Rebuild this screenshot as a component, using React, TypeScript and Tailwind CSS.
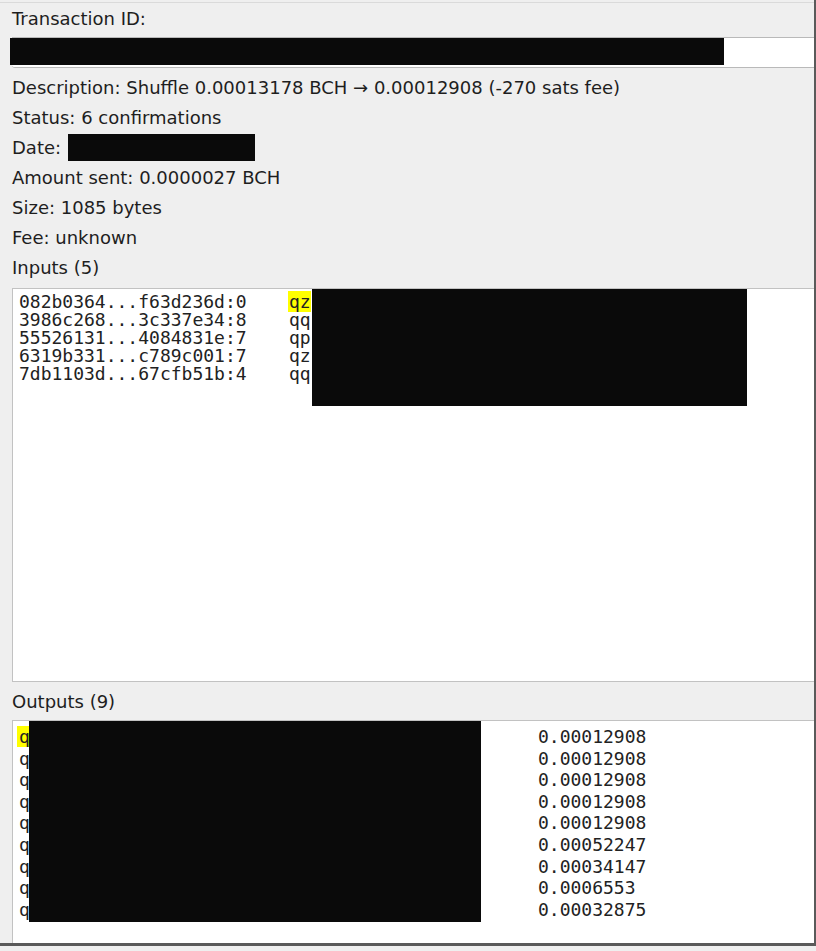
const inputs = [
  { prevout: "082b0364...f63d236d:0", addr: "qz", mine: true },
  { prevout: "3986c268...3c337e34:8", addr: "qq", mine: false },
  { prevout: "55526131...4084831e:7", addr: "qp", mine: false },
  { prevout: "6319b331...c789c001:7", addr: "qz", mine: false },
  { prevout: "7db1103d...67cfb51b:4", addr: "qq", mine: false },
];

const outputs = [
  { addr: "q", amount: "0.00012908", mine: true },
  { addr: "q", amount: "0.00012908", mine: false },
  { addr: "q", amount: "0.00012908", mine: false },
  { addr: "q", amount: "0.00012908", mine: false },
  { addr: "q", amount: "0.00012908", mine: false },
  { addr: "q", amount: "0.00052247", mine: false },
  { addr: "q", amount: "0.00034147", mine: false },
  { addr: "q", amount: "0.0006553", mine: false },
  { addr: "q", amount: "0.00032875", mine: false },
];

const sans = "font-['DejaVu_Sans',sans-serif]";
const mono = "font-['DejaVu_Sans_Mono',monospace]";

function InfoRow({ children }: { children: React.ReactNode }) {
  return <div className="h-[30px] flex items-center">{children}</div>;
}

export default function App() {
  return (
    <div
      className={`w-[816px] h-[951px] bg-[#efefef] text-[18px] text-[#1e1e1e] ${sans} flex flex-col`}
    >
      <div className="h-[946px] border-r-2 border-b-[3px] border-[#5a5a5a] flex flex-col pt-[2px]">
        <div className="border-t border-[#dadada] flex flex-col flex-1 pl-[12px]">
          <div className="h-[31px] flex items-center">Transaction ID:</div>

          {/* tx id field, value hidden */}
          <div className="relative mt-[3px] h-[31px] bg-white border-y border-[#b9b9b9] rounded-bl-[3px]">
            <div className="absolute left-[-2px] top-0 w-[714px] h-[27px] bg-[#0a0a0a]" />
          </div>

          <div className="mt-[4px] flex flex-col">
            <InfoRow>
              Description: Shuffle 0.00013178 BCH → 0.00012908 (-270 sats fee)
            </InfoRow>
            <InfoRow>Status: 6 confirmations</InfoRow>
            <InfoRow>
              Date:
              <span className="ml-[7px] inline-block w-[187px] h-[27px] bg-[#0a0a0a]" />
            </InfoRow>
            <InfoRow>Amount sent: 0.0000027 BCH</InfoRow>
            <InfoRow>Size: 1085 bytes</InfoRow>
            <InfoRow>Fee: unknown</InfoRow>
            <InfoRow>Inputs (5)</InfoRow>
          </div>

          {/* inputs list */}
          <div
            className={`relative mt-[6px] h-[394px] bg-white border-t border-l border-b border-[#c2c2c2] pt-[4px] pl-[6px] ${mono} text-[18px] leading-[18px] text-[#222]`}
          >
            {inputs.map((row, i) => (
              <div key={i} className="grid grid-cols-[269px_1fr] h-[18px]">
                <span>{row.prevout}</span>
                <span>
                  <span className={row.mine ? "bg-[#ffff00] pl-[1px]" : "pl-[1px]"}>
                    {row.addr}
                  </span>
                </span>
              </div>
            ))}
            <div className="absolute left-[299px] top-0 w-[435px] h-[117px] bg-[#0a0a0a]" />
          </div>

          <div className="mt-[4px] h-[30px] flex items-center">Outputs (9)</div>

          {/* outputs list */}
          <div
            className={`relative mt-[4px] flex-1 bg-white border-t border-l border-[#c2c2c2] pt-[5px] pl-[6px] ${mono} text-[18px] leading-[21.6px] text-[#222]`}
          >
            {outputs.map((row, i) => (
              <div key={i} className="grid grid-cols-[519px_1fr] h-[21.6px]">
                <span>
                  <span className={row.mine ? "bg-[#ffff00] -ml-[2px] pl-[2px]" : ""}>
                    {row.addr}
                  </span>
                </span>
                <span>{row.amount}</span>
              </div>
            ))}
            <div className="absolute left-[16px] top-0 w-[452px] h-[201px] bg-[#0a0a0a]" />
          </div>
        </div>
      </div>
    </div>
  );
}
